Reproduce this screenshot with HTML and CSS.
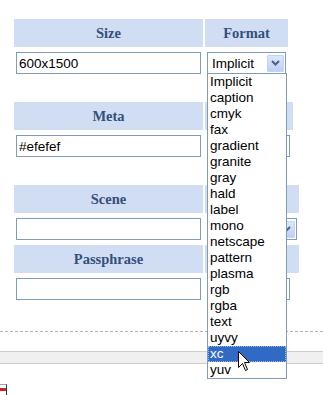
FILE: index.html
```html
<!DOCTYPE html>
<html lang="en">
<head>
    <meta charset="UTF-8">
    <title>Convert</title>
    <link rel="stylesheet" href="styles.css">
</head>
<body>
    <div class="page">
        <div class="grid grid-1">
            <div class="head">Size</div>
            <div class="head">Format</div>
            <div class="cell"><input class="field" type="text" value="600x1500"></div>
            <div class="cell">
                <div class="select">
                    <span>Implicit</span>
                    <span class="arrow"><svg width="9" height="6" viewBox="0 0 9 6"><path d="M1 1 L4.5 4.5 L8 1" fill="none" stroke="#4d6185" stroke-width="2"/></svg></span>
                </div>
            </div>
        </div>

        <div class="grid grid-2">
            <div class="head">Meta</div>
            <div class="head"></div>
            <div class="cell"><input class="field" type="text" value="#efefef"></div>
            <div class="cell cell-narrow"><input class="field" type="text" value=""></div>
        </div>

        <div class="grid grid-3">
            <div class="head">Scene</div>
            <div class="head"></div>
            <div class="cell"><input class="field" type="text" value=""></div>
            <div class="cell">
                <div class="select">
                    <span></span>
                    <span class="arrow"><svg width="9" height="6" viewBox="0 0 9 6"><path d="M1 1 L4.5 4.5 L8 1" fill="none" stroke="#4d6185" stroke-width="2"/></svg></span>
                </div>
            </div>
            <div class="head">Passphrase</div>
            <div class="head"></div>
            <div class="cell"><input class="field" type="text" value=""></div>
            <div class="cell cell-short"><input class="field" type="text" value=""></div>
        </div>
    </div>

    <div class="divider"></div>
    <div class="band"></div>
    <div class="corner-icon"></div>

    <ul class="dropdown">
        <li>Implicit</li>
        <li>caption</li>
        <li>cmyk</li>
        <li>fax</li>
        <li>gradient</li>
        <li>granite</li>
        <li>gray</li>
        <li>hald</li>
        <li>label</li>
        <li>mono</li>
        <li>netscape</li>
        <li>pattern</li>
        <li>plasma</li>
        <li>rgb</li>
        <li>rgba</li>
        <li>text</li>
        <li>uyvy</li>
        <li class="active">xc</li>
        <li>yuv</li>
    </ul>

    <svg class="cursor" width="13" height="21" viewBox="0 0 13 21">
        <path d="M0.5 0.5 L0.5 16.5 L4.5 12.5 L7.5 19.5 L9.5 18.5 L6.5 11.5 L11.5 11.5 Z" fill="#fff" stroke="#000" stroke-width="1"/>
    </svg>
</body>
</html>
```

FILE: styles.css
```css
body {
    margin: 0;
    background: #fff;
    font-family: "Liberation Sans", Arial, sans-serif;
    font-size: 13.5px;
    color: #000;
    position: relative;
    height: 395px;
    overflow: hidden;
}
.page {
    padding: 19px 0 0 14px;
}
.grid {
    display: grid;
    column-gap: 2px;
    row-gap: 5px;
}
.grid + .grid {
    margin-top: 28px;
}
.grid-1 {
    grid-template-columns: 189px 83px;
}
.grid-2 {
    grid-template-columns: 189px 88px;
}
.grid-3 {
    grid-template-columns: 189px 94px;
}
.head {
    height: 28px;
    line-height: 28px;
    background: #d1ddf3;
    color: #34507c;
    font-family: "Liberation Serif", "Times New Roman", serif;
    font-weight: bold;
    font-size: 14.5px;
    text-align: center;
}
.cell {
    padding: 0 2px;
}
.cell-narrow {
    padding-right: 3px;
}
.cell-short {
    padding-right: 9px;
}
.field {
    display: block;
    box-sizing: border-box;
    width: 100%;
    height: 22px;
    margin: 0;
    padding: 0 2px;
    border: 1px solid #7f9db9;
    font-family: "Liberation Sans", Arial, sans-serif;
    font-size: 13.5px;
    color: #000;
    background: #fff;
    outline: none;
}
.select {
    box-sizing: border-box;
    height: 22px;
    border: 1px solid #7f9db9;
    display: flex;
    align-items: center;
    justify-content: space-between;
    padding: 0 1px 0 4px;
    background: #fff;
}
.arrow {
    box-sizing: border-box;
    width: 17px;
    height: 17px;
    display: flex;
    align-items: center;
    justify-content: center;
    background: linear-gradient(#dce6fb, #bfd0f6);
    border: 1px solid #c3d3f8;
    border-radius: 1px;
}
.divider {
    margin-top: 31px;
    border-top: 1px dashed #b4b4b4;
}
.band {
    margin-top: 19px;
    height: 11px;
    background: #f0f0f0;
    border-top: 1px solid #cdcdcd;
    border-bottom: 1px solid #cdcdcd;
}
.corner-icon {
    margin-top: 20px;
    width: 6px;
    height: 13px;
    border-right: 1px solid #2a3b3c;
    border-top: 1px solid #9aa6a8;
    background: linear-gradient(#fff 0 3px, #c8262a 3px 6px, #fff 6px);
}
.dropdown {
    position: absolute;
    left: 207px;
    top: 73px;
    width: 78px;
    margin: 0;
    padding: 0;
    list-style: none;
    border: 1px solid #7f9db9;
    background: #fff;
}
.dropdown li {
    height: 16px;
    line-height: 16px;
    padding-left: 2px;
    font-size: 13.5px;
}
.dropdown .active {
    background: #316ac5;
    color: #fff;
    outline: 1px dotted #9bb6e3;
    outline-offset: -1px;
}
.cursor {
    position: absolute;
    left: 238px;
    top: 351px;
}
```
